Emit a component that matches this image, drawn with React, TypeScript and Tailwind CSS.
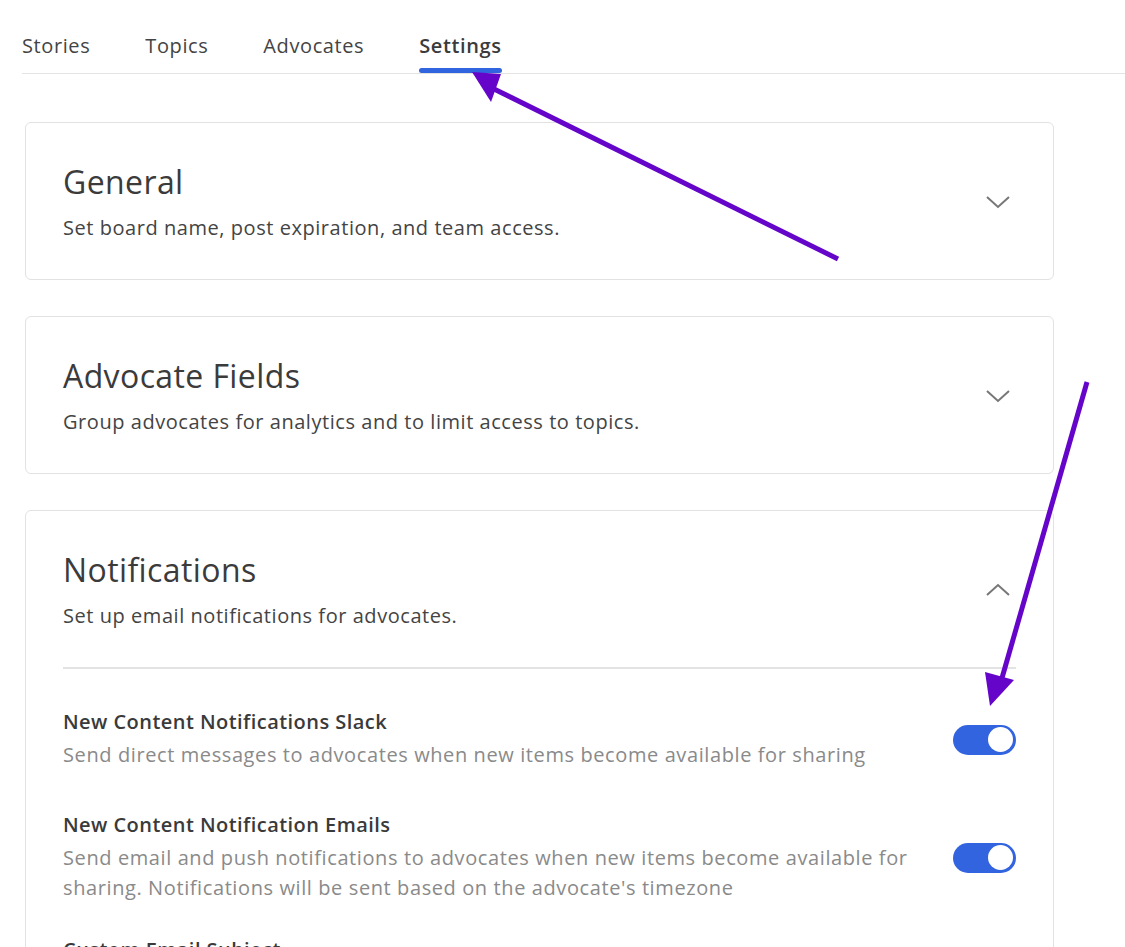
import React from 'react';

const tabs = ['Stories', 'Topics', 'Advocates', 'Settings'];

const Chevron: React.FC<{ up?: boolean }> = ({ up }) => (
  <svg width="26" height="16" viewBox="0 0 26 16" className="mr-[5px] shrink-0">
    <path
      d={up ? 'M2 13 L13 3 L24 13' : 'M2 3 L13 13 L24 3'}
      fill="none"
      stroke="#777"
      strokeWidth="2"
    />
  </svg>
);

const Toggle: React.FC = () => (
  <div className="w-[63px] h-[30px] rounded-full bg-[#3364df] flex items-center justify-end pr-[3px] shrink-0">
    <div className="w-[25px] h-[25px] rounded-full bg-white" />
  </div>
);

const CardHeader: React.FC<{ title: string; desc: string; up?: boolean }> = ({ title, desc, up }) => (
  <div className="flex items-center justify-between">
    <div>
      <h2 className="text-[32px] leading-[38px] tracking-[0.4px] text-[#3b3b3b]">{title}</h2>
      <p className="mt-[14px] text-[20px] leading-[26px] tracking-[0.55px] text-[#444]">{desc}</p>
    </div>
    <Chevron up={up} />
  </div>
);

const SettingRow: React.FC<{ title: string; desc: React.ReactNode }> = ({ title, desc }) => (
  <div className="flex items-center justify-between gap-8">
    <div className="max-w-[870px]">
      <h3 className="text-[20px] leading-[26px] tracking-[0.45px] font-semibold text-[#3a3a3a]">{title}</h3>
      <p className="mt-[5px] text-[20px] leading-[30px] tracking-[0.6px] text-[#8a8a8a]">{desc}</p>
    </div>
    <Toggle />
  </div>
);

export default function App() {
  return (
    <div className="relative h-[947px] overflow-hidden bg-white font-['Open_Sans',sans-serif]">
      <nav className="ml-[22px] flex gap-[55px] border-b border-[#e3e3e3] h-[74px] pt-[31px]">
        {tabs.map(t => (
          <div key={t} className="relative">
            <span
              className={`text-[20px] leading-[30px] tracking-[0.6px] ${
                t === 'Settings' ? 'font-semibold text-[#3b3b3b]' : 'text-[#444]'
              }`}
            >
              {t}
            </span>
            {t === 'Settings' && (
              <div className="absolute left-0 right-0 top-[37px] h-[5px] rounded-full bg-[#3164df]" />
            )}
          </div>
        ))}
      </nav>

      <div className="ml-[25px] w-[1029px] mt-[48px] flex flex-col gap-[36px]">
        <section className="border border-[#e2e2e2] rounded-[6px] px-[37px] pt-[40px] pb-[38px]">
          <CardHeader title="General" desc="Set board name, post expiration, and team access." />
        </section>
        <section className="border border-[#e2e2e2] rounded-[6px] px-[37px] pt-[40px] pb-[38px]">
          <CardHeader title="Advocate Fields" desc="Group advocates for analytics and to limit access to topics." />
        </section>
        <section className="border border-[#e2e2e2] rounded-[6px] px-[37px] pt-[40px] pb-[40px]">
          <CardHeader title="Notifications" desc="Set up email notifications for advocates." up />
          <div className="mt-[38px] border-t-2 border-[#e3e3e3]" />
          <div className="mt-[40px] flex flex-col">
            <SettingRow
              title="New Content Notifications Slack"
              desc="Send direct messages to advocates when new items become available for sharing"
            />
            <div className="mt-[42px]">
              <SettingRow
                title="New Content Notification Emails"
                desc="Send email and push notifications to advocates when new items become available for sharing. Notifications will be sent based on the advocate's timezone"
              />
            </div>
            <h3 className="mt-[34px] text-[20px] leading-[26px] tracking-[0.45px] font-semibold text-[#3a3a3a]">
              Custom Email Subject
            </h3>
          </div>
        </section>
      </div>

      <svg className="absolute inset-0 pointer-events-none" width="1125" height="947" viewBox="0 0 1125 947">
        <line x1="838" y1="259" x2="490" y2="87" stroke="#6505c9" strokeWidth="5" />
        <polygon points="472,72 501,74 491,102" fill="#6505c9" />
        <line x1="1087" y1="382" x2="1002" y2="678" stroke="#6505c9" strokeWidth="5" />
        <polygon points="985,672 1014,680 990,706" fill="#6505c9" />
      </svg>
    </div>
  );
}
